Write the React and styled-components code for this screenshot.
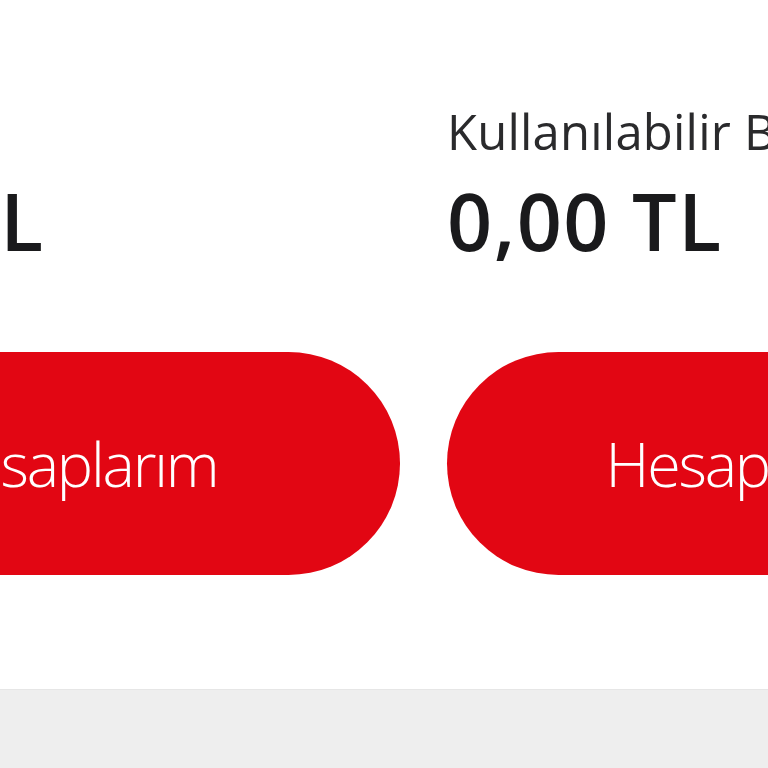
import React from "react";
import styled, { createGlobalStyle } from "styled-components";

const GlobalStyle = createGlobalStyle`
  html, body {
    margin: 0;
    padding: 0;
    background: #ffffff;
    overflow: hidden;
  }
  body {
    font-family: "Open Sans", "Liberation Sans", sans-serif;
    color: #1d1d1f;
  }
`;

const Page = styled.div`
  width: 768px;
  height: 768px;
  display: flex;
  flex-direction: column;
  overflow: hidden;
`;

const Content = styled.div`
  height: 689px;
  background: #ffffff;
  overflow: hidden;
`;

const Row = styled.div`
  display: flex;
  gap: 47px;
  margin-left: -231px;
  padding-top: 101px;
`;

const Column = styled.div`
  flex: 0 0 631px;
  display: flex;
  flex-direction: column;
`;

const Label = styled.div`
  font-size: 49px;
  font-weight: 400;
  line-height: 60px;
  letter-spacing: 0.2px;
  white-space: nowrap;
  color: #2a2a2c;
`;

const Amount = styled.div`
  margin-top: 20px;
  font-size: 79px;
  font-weight: 600;
  line-height: 80px;
  letter-spacing: 1.5px;
  white-space: nowrap;
  color: #1a1a1c;
`;

const Button = styled.button`
  margin-top: 91px;
  width: 631px;
  height: 223px;
  border: none;
  border-radius: 112px;
  background: #e20613;
  color: #ffffff;
  font-family: inherit;
  font-size: 61px;
  font-weight: 300;
  letter-spacing: -2.2px;
  display: flex;
  align-items: center;
  justify-content: center;
  padding: 0 24px 0 0;
  cursor: pointer;
`;

const Footer = styled.div`
  flex: 1;
  background: #eeeeee;
  border-top: 1px solid #e6e6e6;
`;

const balances = [
  { label: "Bakiye", amount: "0,00 TL", action: "Hesaplarım" },
  { label: "Kullanılabilir Bakiye", amount: "0,00 TL", action: "Hesaplarım" },
];

export default function App() {
  return (
    <>
      <GlobalStyle />
      <Page>
        <Content>
          <Row>
            {balances.map((b, i) => (
              <Column key={i}>
                <Label>{b.label}</Label>
                <Amount>{b.amount}</Amount>
                <Button>{b.action}</Button>
              </Column>
            ))}
          </Row>
        </Content>
        <Footer />
      </Page>
    </>
  );
}
